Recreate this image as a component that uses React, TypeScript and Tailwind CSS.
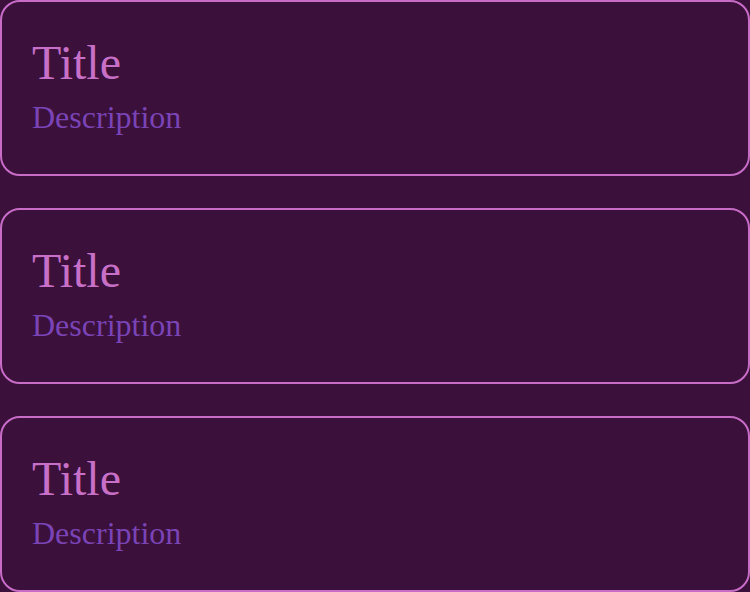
const cards = [
  { title: "Title", description: "Description" },
  { title: "Title", description: "Description" },
  { title: "Title", description: "Description" },
];

const App = () => {
  return (
    <div className="flex flex-col gap-8 min-h-[592px] w-[750px] bg-[#3b103b] font-['Liberation_Serif',serif]">
      {cards.map((card, key) => (
        <div
          key={key}
          className="flex flex-col gap-[9px] h-[176px] pt-[33px] px-[30px] rounded-[20px] border-2 border-[#c86cc8]"
        >
          <h3 className="text-[48px] leading-[55px] text-[#c870c8]">{card.title}</h3>
          <p className="text-[32px] leading-[37px] text-[#7a44b6]">{card.description}</p>
        </div>
      ))}
    </div>
  );
};

export default App;
